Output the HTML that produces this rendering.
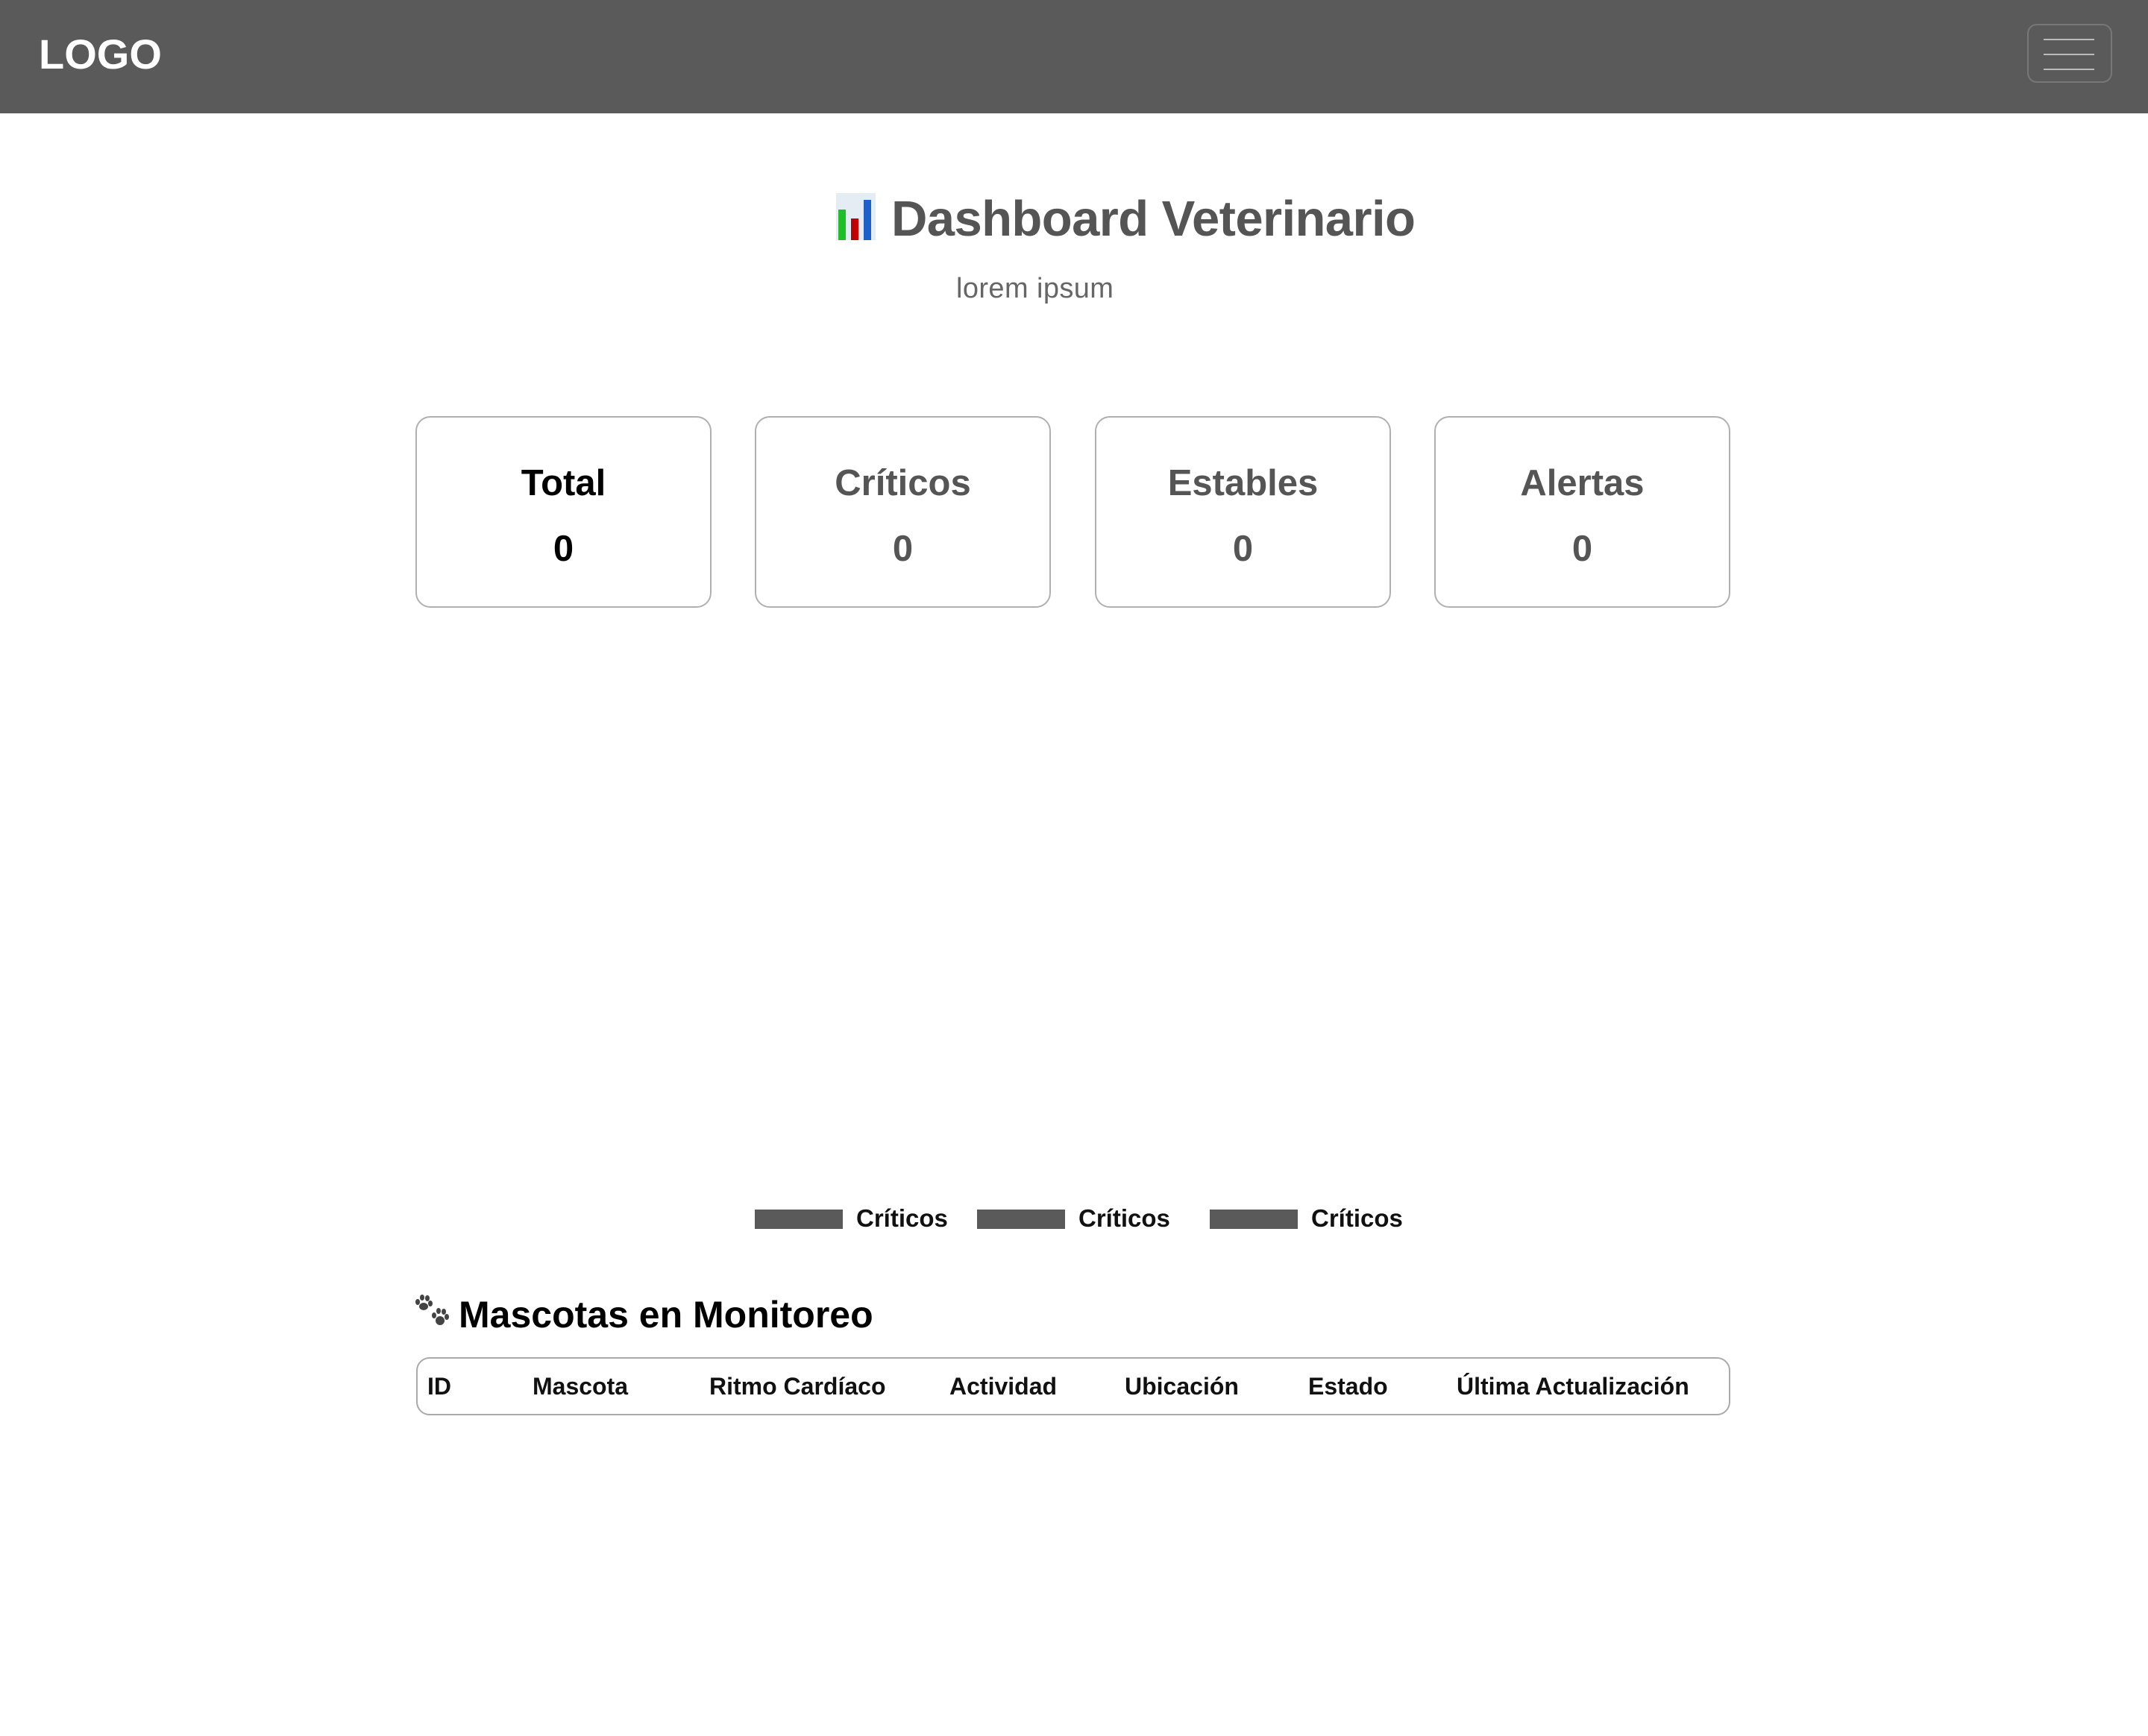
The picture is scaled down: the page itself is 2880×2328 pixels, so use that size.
<!DOCTYPE html>
<html><head><meta charset="utf-8"><style>
*{margin:0;padding:0;box-sizing:border-box}
body{width:2880px;height:2328px;background:#fff;font-family:"Liberation Sans",sans-serif;position:relative;overflow:hidden}
.a{position:absolute;white-space:nowrap}
.hdr{position:absolute;left:0;top:0;width:2880px;height:152px;background:#5a5a5a}
.card{position:absolute;top:558px;width:397px;height:257px;border:2px solid #b0b0b0;border-radius:20px;text-align:center;font-weight:bold;color:#555}
.card .l{position:absolute;left:0;right:0;top:60px;font-size:49px}
.card .v{position:absolute;left:0;right:0;top:148px;font-size:49px}
.sw{position:absolute;top:1622px;width:118px;height:26px;background:#5a5a5a}
.lg{position:absolute;top:1615px;font-size:33px;font-weight:bold;color:#111}
.th{position:absolute;top:1841px;font-size:32px;font-weight:bold;color:#111}
</style></head><body>
<div class="hdr"></div>
<div class="a" style="left:52px;top:40px;font-size:56px;font-weight:bold;color:#fff">LOGO</div>
<div class="a" style="left:2718px;top:32px;width:114px;height:79px;border:2px solid #777;border-radius:13px"></div>
<div class="a" style="left:2740px;top:52px;width:68px;height:2px;background:#bbb"></div>
<div class="a" style="left:2740px;top:72px;width:68px;height:2px;background:#bbb"></div>
<div class="a" style="left:2740px;top:92px;width:68px;height:2px;background:#bbb"></div>

<svg class="a" style="left:1121px;top:259px" width="53" height="63" viewBox="0 0 53 63">
<rect width="53" height="63" fill="#e4ecf4"/>
<rect x="3" y="22" width="10" height="41" fill="#1fbf2a"/>
<rect x="20" y="34" width="10" height="29" fill="#c00000"/>
<rect x="37" y="9" width="10" height="54" fill="#1f5fc8"/>
</svg>
<div class="a" style="left:1195px;top:255px;font-size:67px;font-weight:bold;color:#555;letter-spacing:-0.6px">Dashboard Veterinario</div>
<div class="a" style="left:1282px;top:366px;font-size:38px;color:#666;letter-spacing:0.4px">lorem ipsum</div>

<div class="card" style="left:557px;color:#000"><div class="l">Total</div><div class="v">0</div></div>
<div class="card" style="left:1012px"><div class="l">Críticos</div><div class="v">0</div></div>
<div class="card" style="left:1468px"><div class="l">Estables</div><div class="v">0</div></div>
<div class="card" style="left:1923px"><div class="l">Alertas</div><div class="v">0</div></div>

<div class="sw" style="left:1012px"></div><div class="lg a" style="left:1148px">Críticos</div>
<div class="sw" style="left:1310px"></div><div class="lg a" style="left:1446px">Críticos</div>
<div class="sw" style="left:1622px"></div><div class="lg a" style="left:1758px">Críticos</div>

<svg class="a" style="left:555px;top:1734px" width="50" height="50" viewBox="0 0 50 50" fill="#444">
<ellipse cx="5" cy="12" rx="3" ry="4"/><ellipse cx="11" cy="6" rx="3" ry="4"/><ellipse cx="18" cy="7" rx="3" ry="4"/><ellipse cx="22" cy="14" rx="3" ry="4"/><ellipse cx="13" cy="18" rx="6" ry="5"/>
<ellipse cx="27" cy="30" rx="3" ry="4"/><ellipse cx="33" cy="24" rx="3" ry="4"/><ellipse cx="40" cy="25" rx="3" ry="4"/><ellipse cx="44" cy="32" rx="3" ry="4"/><ellipse cx="35" cy="37" rx="6" ry="6"/>
</svg>
<div class="a" style="left:615px;top:1734px;font-size:50px;font-weight:bold;color:#000">Mascotas en Monitoreo</div>

<div class="a" style="left:558px;top:1820px;width:1762px;height:78px;border:2px solid #aaa;border-radius:18px"></div>
<div class="th a" style="left:573px">ID</div>
<div class="th a" style="left:714px">Mascota</div>
<div class="th a" style="left:951px">Ritmo Cardíaco</div>
<div class="th a" style="left:1273px">Actividad</div>
<div class="th a" style="left:1508px">Ubicación</div>
<div class="th a" style="left:1754px">Estado</div>
<div class="th a" style="left:1953px">Última Actualización</div>
</body></html>
